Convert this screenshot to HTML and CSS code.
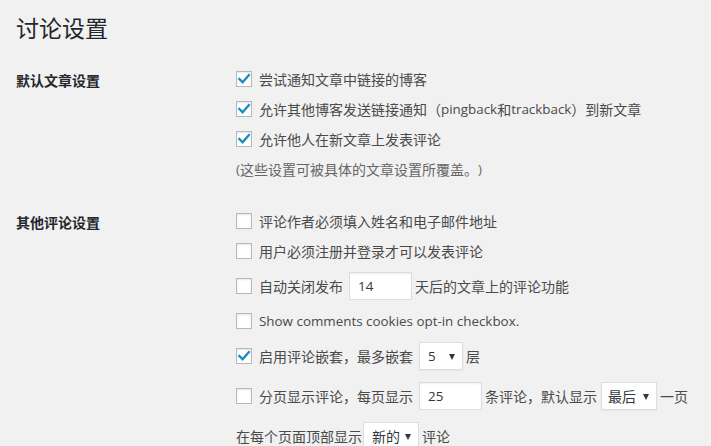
FILE: index.html
```html
<!DOCTYPE html>
<html lang="zh-CN">
<head>
<meta charset="utf-8">
<title>讨论设置</title>
<link rel="stylesheet" href="styles.css">
</head>
<body>
<div class="wrap">
  <h1 class="page-title">讨论设置</h1>

  <section class="setting first">
    <div class="label">默认文章设置</div>
    <div class="fields">
      <div class="row"><span class="cb checked"><svg viewBox="0 0 16 16"><path d="M3.4 8 L6.6 11.2 L12.8 4.2"/></svg></span>尝试通知文章中链接的博客</div>
      <div class="row"><span class="cb checked"><svg viewBox="0 0 16 16"><path d="M3.4 8 L6.6 11.2 L12.8 4.2"/></svg></span>允许其他博客发送链接通知（<span class="latin">pingback</span>和<span class="latin">trackback</span>）到新文章</div>
      <div class="row"><span class="cb checked"><svg viewBox="0 0 16 16"><path d="M3.4 8 L6.6 11.2 L12.8 4.2"/></svg></span>允许他人在新文章上发表评论</div>
      <div class="row note"><span class="latin">(</span>这些设置可被具体的文章设置所覆盖。<span class="latin">)</span></div>
    </div>
  </section>

  <section class="setting">
    <div class="label">其他评论设置</div>
    <div class="fields">
      <div class="row"><span class="cb"></span>评论作者必须填入姓名和电子邮件地址</div>
      <div class="row"><span class="cb"></span>用户必须注册并登录才可以发表评论</div>
      <div class="row"><span class="cb"></span>自动关闭发布<span class="input w63 gap-l latin">14</span><span class="after">天后的文章上的评论功能</span></div>
      <div class="row"><span class="cb"></span><span class="latin">Show comments cookies opt-in checkbox.</span></div>
      <div class="row"><span class="cb checked"><svg viewBox="0 0 16 16"><path d="M3.4 8 L6.6 11.2 L12.8 4.2"/></svg></span>启用评论嵌套，最多嵌套<span class="select w44 gap-l"><span class="latin">5</span><span class="arrow"></span></span><span class="after">层</span></div>
      <div class="row"><span class="cb"></span>分页显示评论，每页显示<span class="input w63 gap-l latin">25</span><span class="after">条评论，默认显示</span><span class="select w56 gap-l2 pad6">最后<span class="arrow"></span></span><span class="after">一页</span></div>
      <div class="row"><span>在每个页面顶部显示</span><span class="select w56 gap-l3">新的<span class="arrow"></span></span><span class="after">评论</span></div>
    </div>
  </section>
</div>
</body>
</html>
```

FILE: styles.css
```css
html, body {
  margin: 0;
  padding: 0;
  background: #f1f1f1;
}

body {
  font-family: "Noto Sans CJK SC", "Noto Sans", sans-serif;
  font-size: 14px;
  color: #4a4a4a;
  overflow: hidden;
}

.latin {
  font-family: "Open Sans", "Noto Sans CJK SC", sans-serif;
  font-size: 13.4px;
}

.wrap {
  padding-left: 16px;
}

.page-title {
  margin: 0;
  padding-top: 13px;
  font-size: 23px;
  line-height: 29px;
  font-weight: 400;
  color: #23282d;
}

.setting {
  display: grid;
  grid-template-columns: 220px 1fr;
  margin-top: 22px;
}

.label {
  padding-top: 7px;
  line-height: 18px;
  font-weight: 700;
  color: #23282d;
}

.fields {
  display: flex;
  flex-direction: column;
}

.row {
  display: flex;
  align-items: center;
  padding: 6px 0;
  line-height: 18px;
  white-space: nowrap;
}

.note {
  color: #666;
}

.cb {
  flex: none;
  width: 14px;
  height: 14px;
  margin-right: 7px;
  border: 1px solid #b4b9be;
  background: #fff;
  box-shadow: inset 0 1px 2px rgba(0, 0, 0, 0.1);
  display: flex;
  align-items: center;
  justify-content: center;
}

.cb svg {
  width: 16px;
  height: 16px;
  flex: none;
}

.cb svg path {
  fill: none;
  stroke: #1e8cbe;
  stroke-width: 2.4;
  stroke-linecap: square;
  stroke-linejoin: miter;
}

.input,
.select {
  box-sizing: border-box;
  height: 28px;
  display: inline-flex;
  align-items: center;
  padding-left: 8px;
  background: #fff;
  border: 1px solid #ddd;
  box-shadow: inset 0 1px 2px rgba(0, 0, 0, 0.07);
  color: #32373c;
  position: relative;
}

.select {
  box-shadow: 0 1px 1px rgba(0, 0, 0, 0.04);
}

.pad6 { padding-left: 6px; }

.arrow {
  position: absolute;
  right: 7px;
  top: 11px;
  width: 0;
  height: 0;
  border-left: 3.5px solid transparent;
  border-right: 3.5px solid transparent;
  border-top: 6px solid #32373c;
}

.w63 { width: 63px; }
.w44 { width: 44px; }
.w56 { width: 56px; }

.gap-l { margin-left: 6px; }
.gap-l2 { margin-left: 4px; }
.gap-l3 { margin-left: 1px; }

.after {
  margin-left: 3px;
}
```
